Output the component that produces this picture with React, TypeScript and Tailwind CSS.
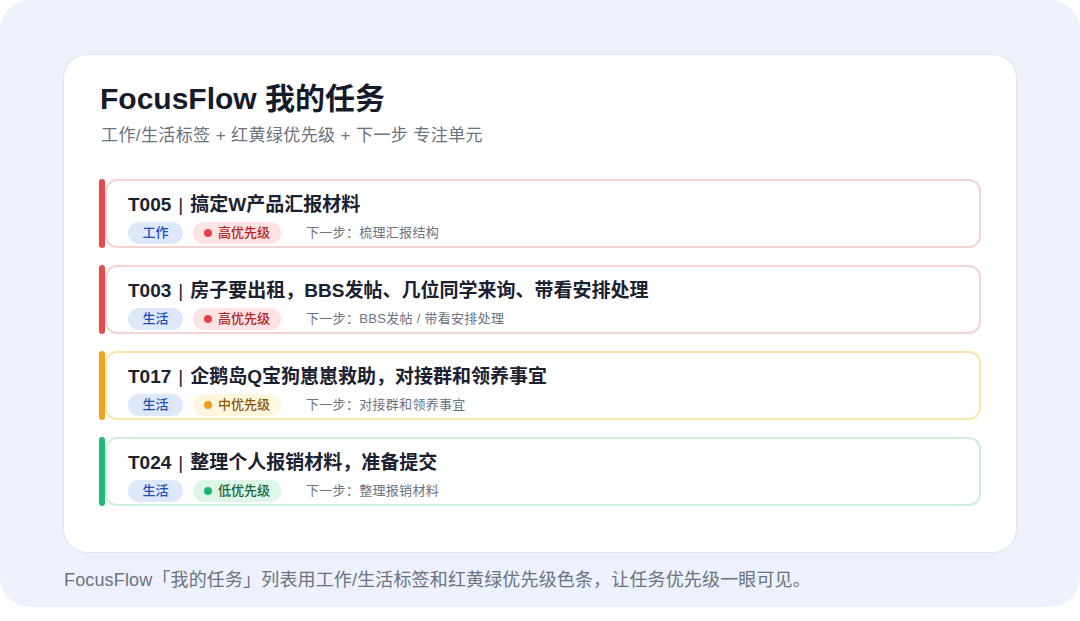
import React from "react";

type Level = "high" | "mid" | "low";

interface Task {
  id: string;
  title: string;
  tag: string;
  level: Level;
  next: string;
}

const tasks: Task[] = [
  { id: "T005", title: "搞定W产品汇报材料", tag: "工作", level: "high", next: "梳理汇报结构" },
  { id: "T003", title: "房子要出租，BBS发帖、几位同学来询、带看安排处理", tag: "生活", level: "high", next: "BBS发帖 / 带看安排处理" },
  { id: "T017", title: "企鹅岛Q宝狗崽崽救助，对接群和领养事宜", tag: "生活", level: "mid", next: "对接群和领养事宜" },
  { id: "T024", title: "整理个人报销材料，准备提交", tag: "生活", level: "low", next: "整理报销材料" },
];

const levelStyle: Record<Level, { bar: string; border: string; pill: string; dot: string; label: string }> = {
  high: {
    bar: "bg-[#e44b4b]",
    border: "border-[#f4d3d3]",
    pill: "bg-[#fde3e3] text-[#b42525]",
    dot: "bg-[#e04444]",
    label: "高优先级",
  },
  mid: {
    bar: "bg-[#f0a41e]",
    border: "border-[#f9e6ad]",
    pill: "bg-[#fef6dd] text-[#8a560c]",
    dot: "bg-[#f29c1f]",
    label: "中优先级",
  },
  low: {
    bar: "bg-[#1fb97a]",
    border: "border-[#cfeedc]",
    pill: "bg-[#def6e8] text-[#17653b]",
    dot: "bg-[#1fb673]",
    label: "低优先级",
  },
};

function TaskRow({ task }: { task: Task }) {
  const s = levelStyle[task.level];
  return (
    <div className="flex h-[69px] shrink-0">
      <div className={`w-[6px] shrink-0 rounded-full ${s.bar}`} />
      <div className={`flex-1 rounded-[12px] border-2 ${s.border} bg-white pl-[21px] pt-[10px]`}>
        <div className="text-[19px] leading-[27px] font-semibold text-[#1b2130]">
          {task.id}
          <span className="inline-block w-[19px] text-center font-normal text-[#1b2130]">|</span>
          {task.title}
        </div>
        <div className="mt-[4px] flex items-center">
          <span className="flex h-[22px] w-[55px] items-center justify-center rounded-full bg-[#dde8fa] text-[13px] font-medium text-[#1f4fb3]">
            {task.tag}
          </span>
          <span className={`ml-[10px] flex h-[22px] items-center gap-[6px] rounded-full pl-[11px] pr-[11px] text-[13px] font-medium ${s.pill}`}>
            <span className={`h-[8px] w-[8px] rounded-full ${s.dot}`} />
            {s.label}
          </span>
          <span className="ml-[25px] text-[13px] tracking-[0.3px] text-[#6b7280]">下一步：{task.next}</span>
        </div>
      </div>
    </div>
  );
}

export default function App() {
  return (
    <div
      className="h-[621px] w-[1080px] bg-white"
      style={{ fontFamily: '"Liberation Sans", "Noto Sans CJK SC", sans-serif' }}
    >
      <div className="h-[607px] rounded-[30px] bg-[#edf1fb] px-[63px] pt-[54px]">
        <div className="h-[499px] rounded-[24px] border border-[#dde3f1] bg-white px-[35px] pt-[24px]">
          <h1 className="pl-[1px] text-[30px] leading-[40px] font-bold text-[#161b29]">FocusFlow 我的任务</h1>
          <p className="mt-[5px] pl-[2px] text-[17px] leading-[24px] tracking-[0.4px] text-[#6b7280]">
            工作/生活标签 + 红黄绿优先级 + 下一步 专注单元
          </p>
          <div className="mt-[31px] flex flex-col gap-[17px]">
            {tasks.map((t) => (
              <TaskRow key={t.id} task={t} />
            ))}
          </div>
        </div>
        <p className="mt-[15px] pl-[1px] text-[18px] leading-[24px] tracking-[0.15px] text-[#6b7280]">
          FocusFlow「我的任务」列表用工作/生活标签和红黄绿优先级色条，让任务优先级一眼可见。
        </p>
      </div>
    </div>
  );
}
